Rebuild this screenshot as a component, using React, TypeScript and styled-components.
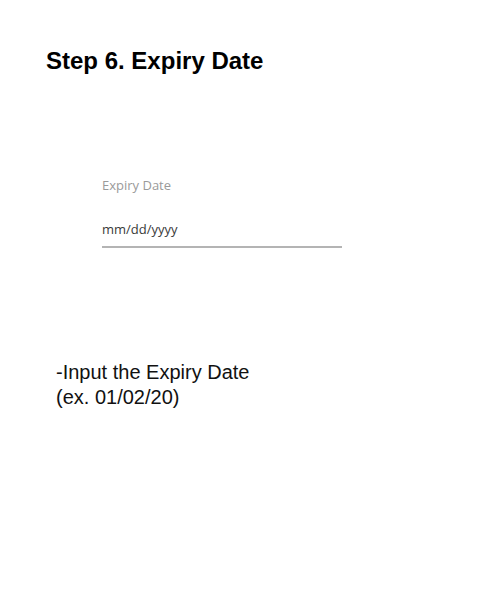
import React from "react";
import styled, { createGlobalStyle } from "styled-components";

const GlobalStyle = createGlobalStyle`
  html, body {
    margin: 0;
    padding: 0;
    background: #ffffff;
  }
`;

const Page = styled.div`
  width: 500px;
  height: 602px;
  box-sizing: border-box;
  padding-top: 47px;
  font-family: "Liberation Sans", Arial, sans-serif;
  color: #000;
`;

const Title = styled.h1`
  margin: 0 0 0 46px;
  font-size: 24px;
  line-height: 28px;
  font-weight: 700;
`;

const Field = styled.div`
  width: 240px;
  margin: 102px 0 0 102px;
  display: flex;
  flex-direction: column;
  gap: 28px;
  font-family: "Open Sans", "Noto Sans", sans-serif;
`;

const Label = styled.label`
  font-size: 13px;
  line-height: 16px;
  color: #9a9a9a;
`;

const DateInput = styled.input`
  width: 100%;
  box-sizing: border-box;
  border: none;
  border-bottom: 2px solid #b4b4b4;
  padding: 0 0 9px 0;
  margin: 0;
  outline: none;
  background: transparent;
  font-family: inherit;
  font-size: 13px;
  line-height: 16px;
  height: 27px;
  color: #333;

  &::placeholder {
    color: #3a3a3a;
    opacity: 1;
  }
`;

const Instructions = styled.p`
  margin: 112px 0 0 56px;
  font-size: 20px;
  line-height: 25px;
  color: #111;
`;

export default function App() {
  return (
    <>
      <GlobalStyle />
      <Page>
        <Title>Step 6. Expiry Date</Title>
        <Field>
          <Label htmlFor="expiry">Expiry Date</Label>
          <DateInput id="expiry" type="text" placeholder="mm/dd/yyyy" />
        </Field>
        <Instructions>
          -Input the Expiry Date
          <br />
          (ex. 01/02/20)
        </Instructions>
      </Page>
    </>
  );
}
